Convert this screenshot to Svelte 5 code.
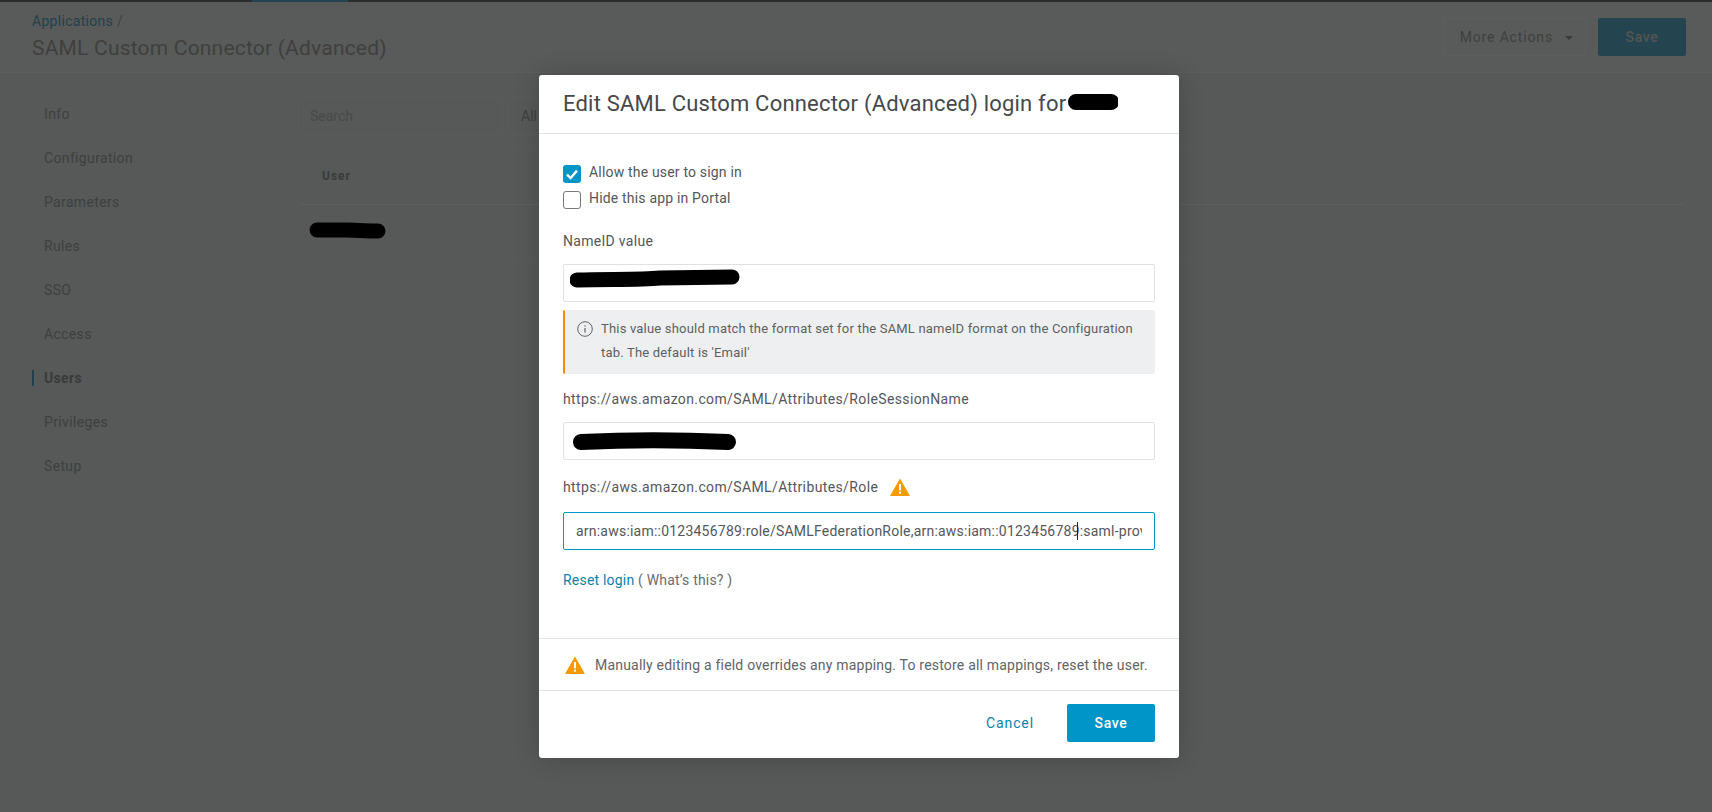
<script lang="ts">
	const navItems = ['Info', 'Configuration', 'Parameters', 'Rules', 'SSO', 'Access', 'Users', 'Privileges', 'Setup'];
	const roleValue =
		'arn:aws:iam::0123456789:role/SAMLFederationRole,arn:aws:iam::0123456789:saml-provider/SAMLProvider';
</script>

{#snippet warning()}
	<svg class="warn" viewBox="0 0 20 18">
		<path d="M10 0.5 19.6 17.2a.5.5 0 0 1-.4.8H.8a.5.5 0 0 1-.4-.8z" fill="#f59a00" />
		<rect x="9" y="6" width="2" height="6.4" fill="#fff" />
		<rect x="9" y="13.6" width="2" height="2" fill="#fff" />
	</svg>
{/snippet}

<div class="page">
	<div class="topbar"><span class="topbar-active"></span></div>

	<header class="head">
		<div>
			<div class="crumb"><span class="crumb-link">Applications</span> /</div>
			<h1>SAML Custom Connector (Advanced)</h1>
		</div>
		<div class="head-actions">
			<button class="btn-more">More Actions <span class="caret"></span></button>
			<button class="btn-save">Save</button>
		</div>
	</header>

	<div class="main">
		<nav class="side">
			{#each navItems as item}
				<div class="nav-item" class:active={item === 'Users'}>{item}</div>
			{/each}
		</nav>
		<section class="content">
			<div class="filters">
				<div class="search">Search</div>
				<div class="select">All</div>
			</div>
			<div class="table">
				<div class="th">User</div>
				<div class="tr">
					<svg class="scribble" width="78" height="18" viewBox="0 0 78 18">
						<path d="M8 8H38L62 9H69" stroke="#000" stroke-width="15" stroke-linecap="round" fill="none" />
					</svg>
				</div>
			</div>
		</section>
	</div>

	<div class="overlay">
		<div class="modal">
			<div class="modal-head">
				<h2>Edit SAML Custom Connector (Advanced) login for</h2>
				<svg class="title-scribble" width="50" height="16" viewBox="0 0 50 16">
					<path d="M8 8H43" stroke="#000" stroke-width="16" stroke-linecap="round" fill="none" />
				</svg>
			</div>

			<div class="modal-body">
				<label class="check">
					<span class="box on">
						<svg viewBox="0 0 18 18" width="18" height="18">
							<path d="M4 9.6 7.6 13 14 5.6" fill="none" stroke="#fff" stroke-width="2.4" />
						</svg>
					</span>
					Allow the user to sign in
				</label>
				<label class="check second">
					<span class="box"></span>
					Hide this app in Portal
				</label>

				<div class="label first">NameID value</div>
				<div class="field">
					<svg class="field-scribble" width="180" height="24" viewBox="0 0 180 24">
						<path d="M7 13C40 12 70 13 90 11L162 10" stroke="#000" stroke-width="15" stroke-linecap="round" fill="none" />
					</svg>
				</div>
				<div class="alert">
					<svg class="info" viewBox="0 0 16 16" width="16" height="16">
						<circle cx="8" cy="8" r="7.3" fill="none" stroke="#5f6265" stroke-width="1" />
						<rect x="7.4" y="7" width="1.2" height="4.6" fill="#5f6265" />
						<rect x="7.4" y="4.4" width="1.2" height="1.3" fill="#5f6265" />
					</svg>
					<p>This value should match the format set for the SAML nameID format on the Configuration tab. The default is 'Email'</p>
				</div>

				<div class="label session">https://aws.amazon.com/SAML/Attributes/RoleSessionName</div>
				<div class="field">
					<svg class="field-scribble second-scribble" width="170" height="24" viewBox="0 0 170 24">
						<path d="M8 12C50 10 110 10 155 12" stroke="#000" stroke-width="16" stroke-linecap="round" fill="none" />
					</svg>
				</div>

				<div class="label role">
					https://aws.amazon.com/SAML/Attributes/Role
					{@render warning()}
				</div>
				<div class="field-wrap">
					<input class="input" value={roleValue} readonly />
					<span class="text-cursor"></span>
				</div>

				<div class="reset"><span class="link">Reset login</span> ( What’s this? )</div>
			</div>

			<div class="note">
				{@render warning()}
				<span>Manually editing a field overrides any mapping. To restore all mappings, reset the user.</span>
			</div>

			<div class="modal-foot">
				<button class="cancel">Cancel</button>
				<button class="save">Save</button>
			</div>
		</div>
	</div>
</div>

<style>
	:global(body) {
		margin: 0;
		font-family: Roboto, "Liberation Sans", sans-serif;
	}

	button {
		font-family: inherit;
		cursor: pointer;
	}

	.page {
		position: relative;
		height: 812px;
		overflow: hidden;
		background: #d7dedc;
		color: #9c9f9e;
	}

	.topbar {
		height: 2px;
		background: #6b7070;
		padding-left: 252px;
	}

	.topbar-active {
		display: block;
		width: 96px;
		height: 2px;
		background: #5aaac8;
	}

	.head {
		display: flex;
		justify-content: space-between;
		height: 70px;
		padding: 0 26px 0 32px;
		background: #dee3e1;
		border-bottom: 1px solid #e6ebe9;
		box-sizing: content-box;
	}

	.crumb {
		margin-top: 10px;
		font-size: 14px;
		line-height: 18px;
		letter-spacing: 0.3px;
	}

	.crumb-link {
		color: #5aa0bb;
	}

	h1 {
		margin: 5px 0 0;
		font-size: 21px;
		line-height: 26px;
		font-weight: 400;
		letter-spacing: 0.2px;
		color: #a09e9c;
	}

	.head-actions {
		display: flex;
		gap: 12px;
		margin-top: 16px;
	}

	.btn-more {
		width: 143px;
		height: 38px;
		padding: 0 0 0 4px;
		background: transparent;
		border: 1px solid #e9edeb;
		border-radius: 2px;
		font-size: 14px;
		letter-spacing: 0.85px;
		color: #9c9f9e;
	}

	.caret {
		display: inline-block;
		width: 0;
		height: 0;
		margin-left: 8px;
		vertical-align: 2px;
		border: 4px solid transparent;
		border-top: 4px solid #8e9190;
		border-bottom: 0;
	}

	.btn-save {
		width: 88px;
		height: 38px;
		background: #5aaac8;
		border: 0;
		border-radius: 2px;
		font-size: 14px;
		font-weight: 500;
		letter-spacing: 0.7px;
		color: #d0d4d4;
	}

	.main {
		display: flex;
	}

	.side {
		width: 298px;
		flex-shrink: 0;
		padding-top: 19px;
		box-sizing: border-box;
	}

	.nav-item {
		height: 44px;
		line-height: 44px;
		padding-left: 44px;
		font-size: 14px;
		letter-spacing: 0.35px;
		position: relative;
	}

	.nav-item.active {
		font-weight: 700;
		color: #8f9291;
	}

	.nav-item.active::before {
		content: "";
		position: absolute;
		left: 32px;
		top: 14px;
		width: 2px;
		height: 16px;
		background: #4fa0bd;
	}

	.content {
		flex: 1;
		padding: 24px 26px 0 0;
	}

	.filters {
		display: flex;
		gap: 5px;
	}

	.search,
	.select {
		height: 38px;
		line-height: 36px;
		box-sizing: border-box;
		border: 1px solid #e1e6e4;
		border-radius: 2px;
		font-size: 14px;
	}

	.search {
		width: 205px;
		padding-left: 11px;
		color: #b3b7b5;
	}

	.select {
		width: 120px;
		padding-left: 12px;
	}

	.table {
		margin-top: 13px;
		border: 1px solid #dde3e1;
		height: 109px;
		box-sizing: border-box;
	}

	.th {
		height: 55px;
		line-height: 55px;
		padding-left: 23px;
		font-size: 12px;
		font-weight: 700;
		letter-spacing: 1px;
		color: #8f9291;
		border-bottom: 1px solid #e8ecea;
	}

	.tr {
		padding: 17px 0 0 10px;
	}

	.scribble {
		display: block;
	}

	.overlay {
		position: absolute;
		inset: 0;
		background: rgba(0, 0, 0, 0.6);
		display: flex;
		justify-content: center;
		padding: 75px 0 0 6px;
		box-sizing: border-box;
	}

	.modal {
		width: 640px;
		height: 683px;
		background: #fff;
		border-radius: 3px;
		box-shadow: 0 0 24px rgba(0, 0, 0, 0.2);
		display: flex;
		flex-direction: column;
	}

	.modal-head {
		position: relative;
		height: 56px;
		flex-shrink: 0;
		padding: 0 0 2px 24px;
		border-bottom: 1px solid #e2e3e5;
		display: flex;
		align-items: center;
	}

	h2 {
		margin: 0;
		font-size: 22px;
		font-weight: 400;
		letter-spacing: 0.2px;
		color: #46484a;
	}

	.title-scribble {
		position: absolute;
		left: 529px;
		top: 19px;
	}

	.modal-body {
		flex: 1;
		padding: 31px 24px 0;
		color: #55575a;
	}

	.check {
		display: flex;
		align-items: flex-start;
		gap: 8px;
		height: 18px;
		font-size: 14px;
		line-height: 14px;
		letter-spacing: 0.18px;
	}

	.check.second {
		margin-top: 8px;
	}

	.box {
		width: 18px;
		height: 18px;
		box-sizing: border-box;
		border: 1px solid #77797b;
		border-radius: 3px;
		flex-shrink: 0;
	}

	.box.on {
		background: #0095c8;
		border: 0;
	}

	.box svg {
		display: block;
	}

	.label {
		font-size: 14px;
		line-height: 18px;
		letter-spacing: 0.38px;
	}

	.label.first {
		letter-spacing: 0.3px;
		margin-top: 23px;
		margin-bottom: 14px;
	}

	.label.session {
		margin-top: 16px;
		margin-bottom: 14px;
	}

	.label.role {
		margin-top: 18px;
		margin-bottom: 16px;
		display: flex;
		align-items: center;
		gap: 12px;
	}

	.field {
		position: relative;
		height: 38px;
		box-sizing: border-box;
		border: 1px solid #dfe0e2;
		border-radius: 2px;
	}

	.field-scribble {
		position: absolute;
		left: 6px;
		top: 2px;
	}

	.second-scribble {
		left: 9px;
		top: 7px;
	}

	.alert {
		margin-top: 8px;
		height: 64px;
		box-sizing: border-box;
		background: #eeeff1;
		border-left: 2px solid #f28c00;
		border-radius: 2px;
		padding: 7px 12px 0 12px;
		display: flex;
		gap: 8px;
	}

	.info {
		flex-shrink: 0;
		margin-top: 4px;
	}

	.alert p {
		margin: 0;
		font-size: 13px;
		line-height: 24px;
		letter-spacing: 0.19px;
		color: #5c5f61;
	}

	.warn {
		width: 20px;
		height: 18px;
		flex-shrink: 0;
	}

	.field-wrap {
		position: relative;
	}

	.input {
		display: block;
		width: 100%;
		height: 38px;
		box-sizing: border-box;
		padding: 0 12px;
		border: 1px solid #0095c8;
		border-radius: 2px;
		outline: none;
		font-family: inherit;
		font-size: 14px;
		letter-spacing: 0.22px;
		color: #55575a;
	}

	.text-cursor {
		position: absolute;
		left: 514px;
		top: 10px;
		width: 1px;
		height: 18px;
		background: #222;
	}

	.reset {
		margin-top: 21px;
		font-size: 14px;
		line-height: 18px;
		letter-spacing: 0.2px;
		color: #6a6d70;
	}

	.link {
		color: #0c82ad;
	}

	.note {
		height: 53px;
		flex-shrink: 0;
		box-sizing: border-box;
		padding: 0 24px 0 26px;
		border-top: 1px solid #e2e3e5;
		border-bottom: 1px solid #e2e3e5;
		display: flex;
		align-items: center;
		gap: 10px;
		font-size: 14px;
		letter-spacing: 0.2px;
		color: #626467;
	}

	.modal-foot {
		height: 67px;
		flex-shrink: 0;
		box-sizing: border-box;
		padding: 13px 24px 0 0;
		display: flex;
		justify-content: flex-end;
		gap: 33px;
	}

	.cancel {
		background: none;
		border: 0;
		padding: 0;
		font-size: 14px;
		letter-spacing: 0.9px;
		color: #0c82ad;
		height: 38px;
	}

	.save {
		width: 88px;
		height: 38px;
		background: #0095c8;
		border: 0;
		border-radius: 2px;
		font-size: 14px;
		font-weight: 500;
		letter-spacing: 0.7px;
		color: #fff;
	}
</style>
